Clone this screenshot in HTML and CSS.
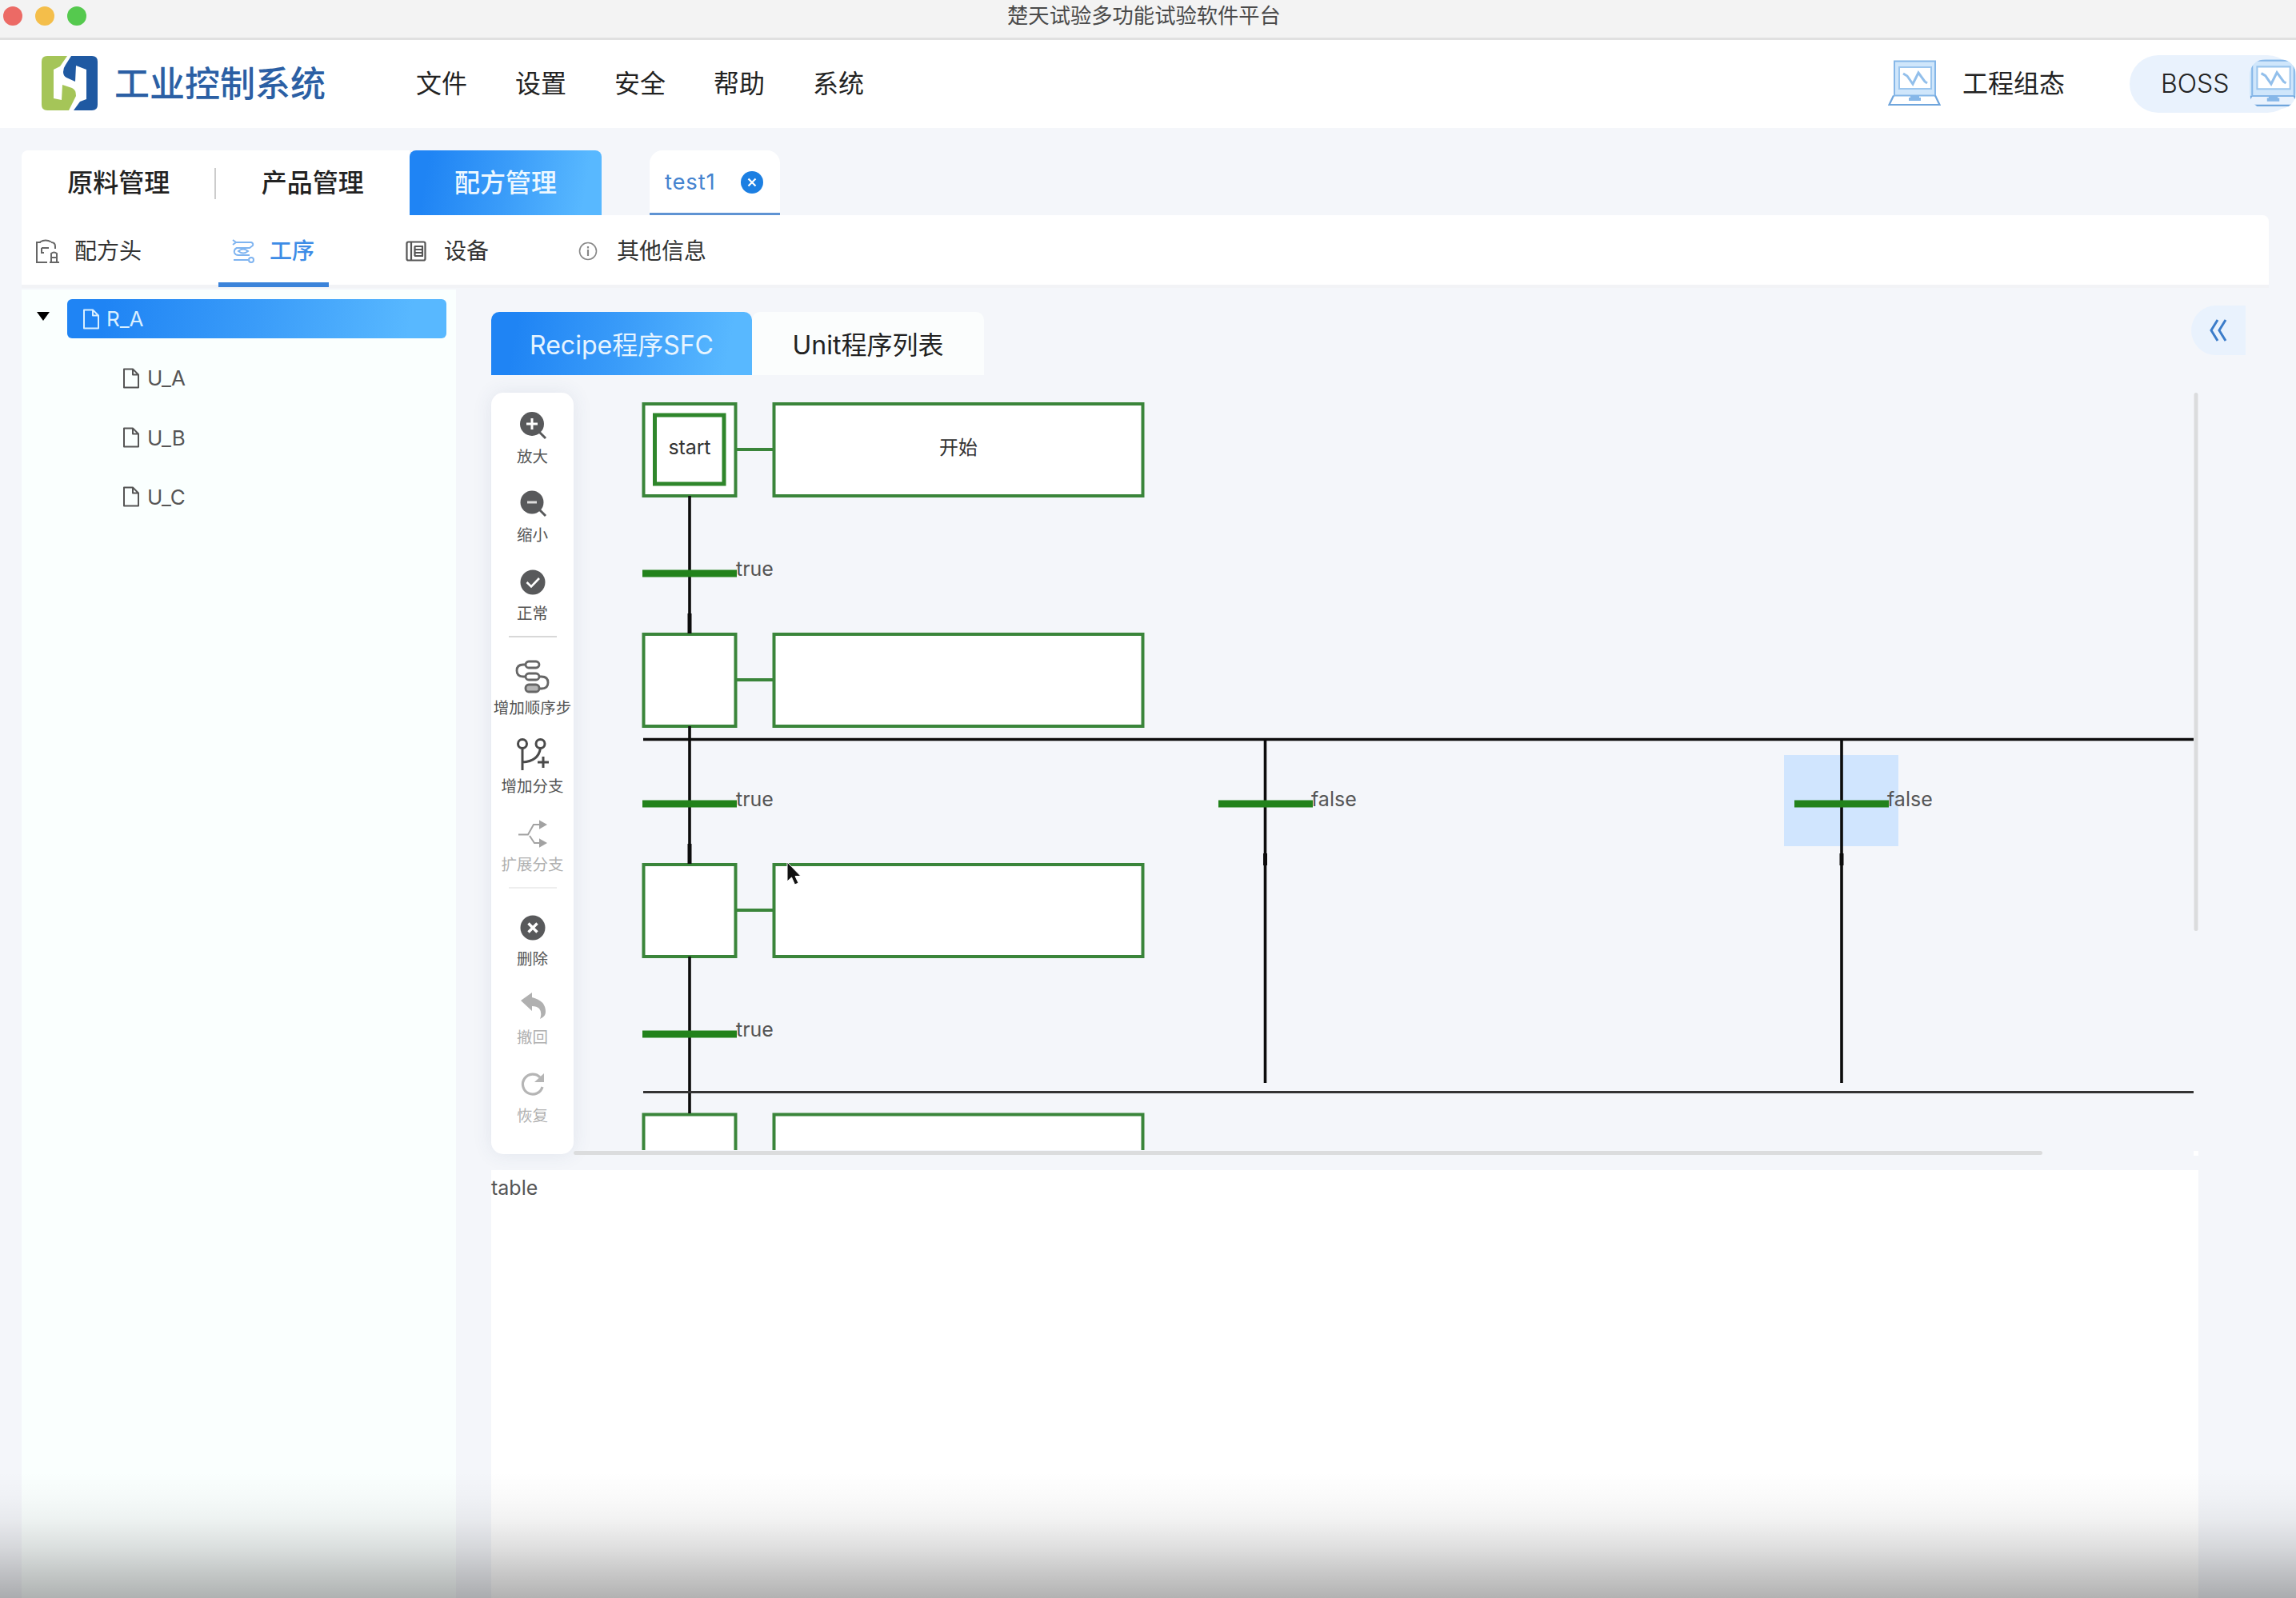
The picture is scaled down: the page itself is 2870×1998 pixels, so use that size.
FILE: index.html
```html
<!DOCTYPE html>
<html lang="zh-CN">
<head>
<meta charset="utf-8">
<title>楚天试验多功能试验软件平台</title>
<link rel="stylesheet" href="styles.css">
</head>
<body>
<svg width="0" height="0" class="defs" aria-hidden="true">
  <symbol id="doc" viewBox="0 0 22 26"><path d="M2 1.500h11l7 7V24.500H2zM13 1.500v7h7" fill="none" stroke="currentColor" stroke-width="2" stroke-linejoin="round"/></symbol>
  <symbol id="monitor" viewBox="0 0 66 58">
    <path d="M8 1.500h51v43H8z" fill="#cfe6fb" stroke="#86b7e8" stroke-width="2"/>
    <path d="M14 9h40v27H14z" fill="#fff" stroke="#9cc6ee" stroke-width="2"/>
    <path d="M19 17l5 3 7 10 7-14 8 11 3 2" fill="none" stroke="#92bfeb" stroke-width="3"/>
    <path d="M7 44.500L1.500 56h63L59 44.500" fill="none" stroke="#6fa5dc" stroke-width="2.200"/>
    <path d="M28 44h11v3h2v4H26v-4h2z" fill="#86b7e8"/>
  </symbol>
</svg>

<div class="titlebar">
  <div class="lights"><i class="red"></i><i class="yellow"></i><i class="green"></i></div>
  <span>楚天试验多功能试验软件平台</span>
</div>

<header class="header">
  <svg class="logo" viewBox="0 0 70 68">
    <path fill="#a5c558" d="M7 0H32L23 13L15 17V53L25 55L26 36L38 40Q43 42 43 50L34 68H7Q0 68 0 61V7Q0 0 7 0Z"/>
    <path fill="#1f59a2" d="M37 0H63Q70 0 70 7V61Q70 68 63 68H40L48 57L56 54V17L43 12L42 32L31 27Q27 25 27 20Q27 15 30 11Z"/>
  </svg>
  <h1 class="brand">工业控制系统</h1>
  <nav class="menu"><a>文件</a><a>设置</a><a>安全</a><a>帮助</a><a>系统</a></nav>
  <div class="project"><svg><use href="#monitor"/></svg><span>工程组态</span></div>
  <div class="user"><span>BOSS</span><div class="avatar"><svg><use href="#monitor"/></svg></div></div>
</header>

<div class="tabs">
  <div class="tab first">原料管理</div>
  <div class="tab">产品管理</div>
  <div class="tab active">配方管理</div>
  <div class="filetab"><span>test1</span>
    <svg viewBox="0 0 28 28"><circle cx="14" cy="14" r="14" fill="#1c7fe2"/><path d="M9.500 9.500l9 9m0-9l-9 9" stroke="#fff" stroke-width="2.200"/></svg>
  </div>
</div>

<div class="subtabs">
  <div class="subtab">
    <svg viewBox="0 0 30 30" fill="none" stroke="#666" stroke-width="2"><path d="M14 29H1V4H6M19 4q5 0 5 5v3M5 3.500q7-4 14 0M7 11h9M7 11v6h3"/><path d="M19 28V18q3.500-3 7 0v10M17 29h12M19 23h7"/></svg>
    <span>配方头</span>
  </div>
  <div class="subtab current">
    <svg viewBox="0 0 30 30" fill="none" stroke="#7fb4f0" stroke-width="2"><path d="M6 4h19q3 1 2 4l-4 3H7q-4 2-3 6q1 3 5 3h14"/><path d="M2 1l4 3-4 3M9 15q6-5 12 0q-6 5-12 0zM3 26h18"/><circle cx="25" cy="26" r="3"/></svg>
    <span>工序</span>
  </div>
  <div class="subtab">
    <svg viewBox="0 0 30 30" fill="none" stroke="#555" stroke-width="2.200"><rect x="1.500" y="3.500" width="23" height="23" rx="2"/><path d="M7 4v22M11 9h11M11 13h11M11 17h11M11 21h11M11.500 9v12M21 9v12"/></svg>
    <span>设备</span>
  </div>
  <div class="subtab">
    <svg viewBox="0 0 30 30" fill="none" stroke="#888" stroke-width="1.600"><circle cx="12" cy="15" r="10.500"/><path d="M12 9v2.500M12 13v8" stroke-width="2.200"/></svg>
    <span>其他信息</span>
  </div>
</div>

<main class="main">
  <aside class="tree">
    <div class="root"><i class="caret"></i><div class="node selected"><svg><use href="#doc"/></svg><span>R_A</span></div></div>
    <div class="node child"><svg><use href="#doc"/></svg><span>U_A</span></div>
    <div class="node child"><svg><use href="#doc"/></svg><span>U_B</span></div>
    <div class="node child"><svg><use href="#doc"/></svg><span>U_C</span></div>
  </aside>

  <section class="work">
    <div class="viewtabs"><div class="viewtab on">Recipe程序SFC</div><div class="viewtab">Unit程序列表</div></div>
    <div class="editor">
      <div class="tools">
        <div class="tool"><svg viewBox="0 0 40 40"><circle cx="19" cy="18" r="15" fill="#58595b"/><path d="M28 28l8 8" stroke="#58595b" stroke-width="3"/><path d="M19 11v14M12 18h14" stroke="#fff" stroke-width="3"/></svg><span>放大</span></div>
        <div class="tool"><svg viewBox="0 0 40 40"><circle cx="19" cy="18" r="14.500" fill="#58595b"/><path d="M28 27l8 8" stroke="#58595b" stroke-width="3"/><path d="M13 18h12" stroke="#ddd" stroke-width="3"/></svg><span>缩小</span></div>
        <div class="tool"><svg viewBox="0 0 40 40"><circle cx="20" cy="20" r="15.500" fill="#58595b"/><path d="M12.500 20l5.500 5.500 10-10.500" fill="none" stroke="#fff" stroke-width="2.600"/></svg><span>正常</span></div>
        <hr>
        <div class="tool"><svg viewBox="0 0 40 40" fill="none" stroke="#666" stroke-width="2.800"><rect x="11" y="1" width="17" height="8" rx="4"/><rect x="11" y="16" width="17" height="8" rx="4"/><rect x="11" y="30" width="17" height="9" rx="4" fill="#b5b5b5"/><path d="M11 5H8q-8 0-8 7.500t8 7.500h3M28 20h3q8 0 8 7.500t-8 7.500h-3"/></svg><span>增加顺序步</span></div>
        <div class="tool"><svg viewBox="0 0 40 40" fill="none" stroke="#4a4a4a" stroke-width="3"><circle cx="7" cy="6" r="5.500"/><circle cx="29.500" cy="6" r="5.500"/><path d="M7 11.500V39M7 29q20-1 22.500-17.500M26 29h14M33 22v14"/></svg><span>增加分支</span></div>
        <div class="tool off"><svg viewBox="0 0 40 40" fill="none" stroke="#a2a2a2" stroke-width="2"><path d="M2 21.500h12L21 9h12M16 23l6 9h12"/><path d="M29 5l7 4-7 4zM29 28l7 4-7 4z" fill="#a2a2a2"/></svg><span>扩展分支</span></div>
        <hr class="pale">
        <div class="tool"><svg viewBox="0 0 40 40"><circle cx="20" cy="20" r="15.500" fill="#58595b"/><path d="M14.500 14.500l11 11m0-11l-11 11" stroke="#fff" stroke-width="3.400"/></svg><span>删除</span></div>
        <div class="tool off"><svg viewBox="0 0 40 40"><path d="M5 13L19 3v6q17 4 17 18q0 6-7 9q3-8-1-13q-3-3-9-3v6z" fill="#b0b0b0"/></svg><span>撤回</span></div>
        <div class="tool off"><svg viewBox="0 0 40 40"><path d="M32 23A12.500 12.500 0 1 1 29 11" fill="none" stroke="#b5b5b5" stroke-width="3.200"/><path d="M34 6v11H22z" fill="#b5b5b5"/></svg><span>恢复</span></div>
      </div>
      <svg class="canvas" viewBox="717 491 2031 954">
        <rect x="2230" y="944" width="143" height="114" fill="#d0e5fe"/>
        <g class="box">
          <rect x="804.500" y="505" width="115" height="115"/><rect x="967.500" y="505" width="461" height="115"/>
          <rect x="804.500" y="793" width="115" height="115"/><rect x="967.500" y="793" width="461" height="115"/>
          <rect x="804.500" y="1081" width="115" height="115"/><rect x="967.500" y="1081" width="461" height="115"/>
          <path d="M804.500 1438V1393.500H919.500V1438M967.500 1438V1393.500H1428.500V1438"/>
          <path d="M921 562H966M921 850H966M921 1138H966"/>
        </g>
        <rect class="inner" x="818.500" y="519" width="86.500" height="86"/>
        <g class="wire">
          <path d="M862 620V792M862 908V1080M862 1196V1392M1581.500 924V1354M2302 924V1354M804 924.500H2742"/>
          <path d="M804 1365.500H2742" stroke="#333" stroke-width="3"/>
          <path d="M862 767V792M862 1055V1080M1581.500 1067V1082M2302 1067V1082" stroke-width="5"/>
        </g>
        <path class="bars" d="M803 717H921M803 1005H921M803 1293H921M1523 1005H1641M2243 1005H2361"/>
        <g class="label">
          <text x="920" y="720">true</text><text x="920" y="1008">true</text><text x="920" y="1296">true</text>
          <text x="1639" y="1008">false</text><text x="2359" y="1008">false</text>
        </g>
        <text class="step" x="862" y="568" textLength="53">start</text>
        <text class="step cn" x="1198" y="568">开始</text>
        <path d="M984 1078V1102L989.500 1097L993.500 1106L998 1104L994 1095.500H1001Z" fill="#111" stroke="#fff" stroke-width="1"/>
        <rect x="717" y="1439" width="1836" height="5" rx="2.500" fill="#dbdcdd"/>
        <rect x="2742.500" y="491" width="5" height="673" rx="2.500" fill="#dbdcdd"/>
        <rect x="2742" y="1439" width="6" height="6" fill="#fff"/>
      </svg>
    </div>
    <div class="table">table</div>
  </section>

  <button class="collapse"><svg viewBox="0 0 24 28" fill="none" stroke="#3b7cc9" stroke-width="3"><path d="M11 1L3 14l8 13M21 1l-8 13 8 13"/></svg></button>
</main>
<div class="shade"></div>
</body>
</html>
```
FILE: styles.css
```css
* { box-sizing: border-box; }
body {
  margin: 0; width: 2870px; height: 1998px; overflow: hidden;
  display: flex; flex-direction: column; position: relative;
  background: #f4f6fa; color: #222;
  font-family: Inter, "Noto Sans CJK SC", sans-serif;
}
svg { display: block; flex: none; }
.defs { position: absolute; }

.titlebar {
  height: 50px; flex: none; position: relative;
  display: flex; justify-content: center; padding-bottom: 8px; align-items: center;
  background: #f3f3f3; border-bottom: 3px solid #e0e0e0;
  font-size: 26.300px; line-height: 38px; color: #4a4a4a;
}
.titlebar span { margin-left: -10px; }
.lights { position: absolute; left: 4px; top: 8px; display: flex; gap: 16px; }
.lights i { width: 24px; height: 24px; border-radius: 50%; }
.red { background: #ec6a65; }
.yellow { background: #f4be4a; }
.green { background: #55c94e; }

.header { height: 110px; flex: none; display: flex; align-items: center; background: #fff; padding-left: 52px; }
.logo { width: 70px; height: 68px; margin-bottom: 2px; }
.brand { margin: 0 0 0 21px; width: 377px; font-size: 44px; font-weight: 500; line-height: 60px; color: #2b5fa4; }
.menu { display: flex; gap: 60px; font-size: 32px; line-height: 48px; }
.project { display: flex; align-items: center; gap: 27px; margin-left: auto; font-size: 32px; line-height: 48px; }
.project svg { width: 66px; height: 58px; margin-bottom: 2px; }
.project span { margin-right: 1px; }
.user {
  width: 208px; height: 72px; margin-left: 80px; padding-left: 39px;
  display: flex; align-items: center; justify-content: space-between;
  background: #e9f2fd; border-radius: 36px; font-size: 32px; font-weight: 300; line-height: 48px;
}
.avatar { width: 58px; height: 62px; border-radius: 20px; overflow: hidden; background: linear-gradient(#cfe6fb 75%, #e9f2fd 75%); display: flex; justify-content: center; }
.avatar svg { width: 68px; height: 60px; }

.tabs { display: flex; height: 81px; flex: none; margin: 28px 0 0 27px; }
.tab {
  width: 242.500px; display: flex; align-items: center; justify-content: center; position: relative;
  background: #fff; font-size: 32px; font-weight: 500; padding-bottom: 5px;
}
.tab.first { border-top-left-radius: 8px; }
.tab.first::after { content: ""; position: absolute; right: 0; top: 22px; width: 2px; height: 39px; background: #ccc; }
.tab.active { width: 240px; color: #eef8ff; border-radius: 8px 8px 0 0; }
.tab.active, .viewtab.on, .selected { background: linear-gradient(100deg, #1f84f4 10%, #3a9cf9 50%, #58b8ff 90%); }
.filetab {
  width: 163px; margin-left: 60px; padding: 0 21px 0 19px;
  display: flex; align-items: center; justify-content: space-between;
  background: #fff; border-radius: 16px 16px 0 0; border-bottom: 3px solid #5f93d3;
  font-size: 27.500px; letter-spacing: .8px; color: #4583cf;
}
.filetab svg { width: 28px; height: 28px; margin-top: 2px; }

.subtabs {
  display: flex; gap: 80px; height: 91px; flex: none; width: 2809px; margin-left: 27px; padding-left: 2px;
  background: #fff; border-bottom: 4px solid #f2f3f6; border-radius: 0 8px 0 0;
}
.subtab { display: flex; align-items: center; gap: 18px; padding: 0 16px; height: 90px; font-size: 28px; line-height: 42px; color: #333; }
.subtab svg { width: 30px; height: 30px; }
.subtab.current { width: 138px; color: #3d8ce6; font-weight: 500; box-shadow: inset 0 -6px #3b83da; }

.main { flex: 1; min-height: 0; display: flex; align-items: flex-start; padding: 2px 0 0 27px; }
.tree { width: 543px; height: 100%; background: #fafffe; padding: 12px 12px 0 19px; }
.root { display: flex; align-items: center; }
.caret { border: 8px solid transparent; border-top: 11px solid #000; border-bottom: 0; margin-right: 22px; margin-top: -7px; }
.node { display: flex; align-items: center; gap: 9px; font-size: 26px; line-height: 49px; height: 49px; }
.node svg { width: 22px; height: 26px; }
.selected { flex: 1; border-radius: 6px; padding-left: 19px; gap: 8px; color: #d9efff; }
.child { margin: 25.300px 0 0 107px; color: #555; }

.work { width: 2134px; margin-left: 44px; padding-top: 28px; height: 100%; display: flex; flex-direction: column; }
.viewtabs { display: flex; height: 79px; flex: none; }
.viewtab { width: 290px; display: flex; align-items: center; justify-content: center; background: #fbfdfd; border-radius: 10px 10px 0 0; font-size: 32px; font-weight: 400; padding-bottom: 1px; }
.viewtab.on { width: 326px; color: #e6f4ff; }
.editor { display: flex; height: 954px; flex: none; margin-top: 22px; }
.tools {
  width: 103px; height: 952px; flex: none; padding-top: 21px;
  background: #fff; border-radius: 15px; box-shadow: 0 0 24px rgba(60, 80, 120, .1);
}
.tool { height: 73px; margin-bottom: 25px; display: flex; flex-direction: column; align-items: center; gap: 5px; font-size: 19.500px; line-height: 28px; color: #555; white-space: nowrap; }
.tool svg { width: 40px; height: 40px; overflow: visible; }
.tool.off { color: #b0b0b0; }
.tools hr { width: 60px; height: 2px; border: 0; margin: -11px auto 29px; background: #d8d8d8; }
.tools hr.pale { background: #eee; }
.canvas { width: 2031px; height: 954px; }
.box { fill: #fff; stroke: #3a853a; stroke-width: 4; }
.inner { fill: #fff; stroke: #2f862b; stroke-width: 5; }
.wire { fill: none; stroke: #0c0c0c; stroke-width: 3.600; }
.bars { stroke: #22821b; stroke-width: 9; }
.label { font-size: 25px; fill: #555; }
.step { font-size: 25px; fill: #333; text-anchor: middle; }
.step.cn { font-size: 24px; }
.table { flex: 1; margin-top: 18px; padding-top: 2px; background: #fff; font-size: 25px; line-height: 40px; color: #555; }

.collapse { width: 68px; height: 62px; margin: 20px 0 0 -9px; padding: 0 0 0 22px; border: 0; border-radius: 31px 0 0 31px; background: #e9f2fd; }
.collapse svg { width: 24px; height: 28px; }
.shade {
  position: absolute; left: 0; right: 0; bottom: 0; height: 158px;
  background: linear-gradient(rgba(0,0,0,0), rgba(0,0,0,.02) 20%, rgba(0,0,0,.05) 38%, rgba(0,0,0,.125) 60%, rgba(0,0,0,.215) 80%, rgba(0,0,0,.3));
}
```
